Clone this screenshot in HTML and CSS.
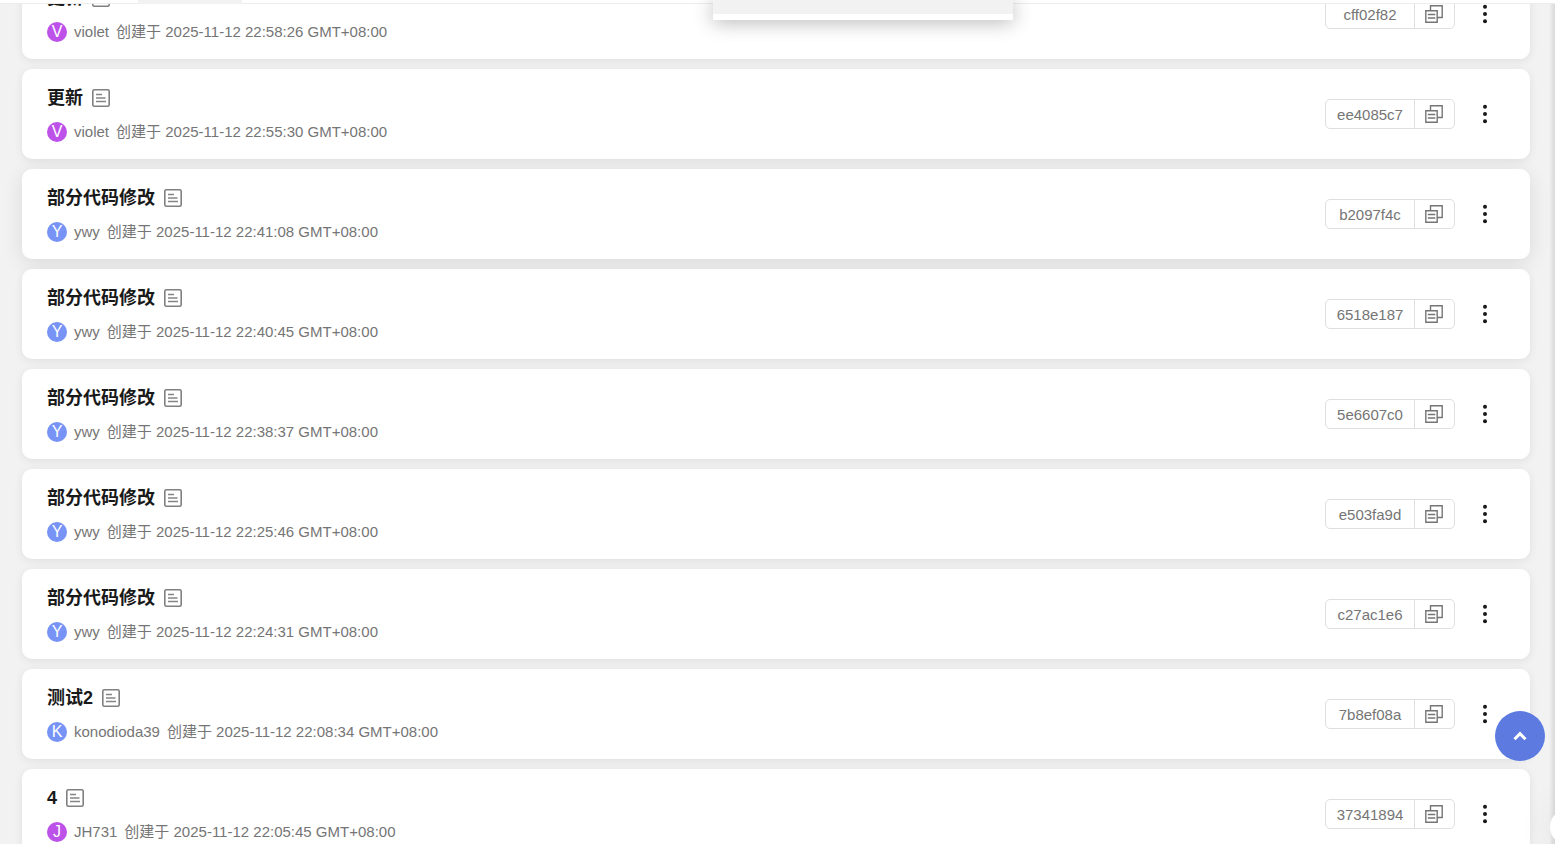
FILE: index.html
```html
<!DOCTYPE html>
<html lang="zh-CN">
<head>
<meta charset="utf-8">
<title>提交记录</title>
<link rel="stylesheet" href="styles.css">
</head>
<body>
<svg class="sprite" aria-hidden="true">
  <symbol id="note" viewBox="0 0 18 18"><rect x=".8" y=".8" width="16.400" height="16.400" rx="1.500" fill="none" stroke="#808080" stroke-width="1.600"/><path d="M4 5.500h6M4 9h9.500M4 12.500h10" stroke="#858585" stroke-width="1.600"/></symbol>
  <symbol id="copy" viewBox="0 0 18 18"><path d="M5.500 5.500V.8h11.700v11.700h-5M.8 5.800h11.400v11.400H.8zM2.800 9.500h7.500M2.800 13h7.500" fill="none" stroke="#757575" stroke-width="1.400"/></symbol>
  <symbol id="dots" viewBox="0 0 6 20"><circle cx="3" cy="2.800" r="2"/><circle cx="3" cy="10" r="2"/><circle cx="3" cy="17.200" r="2"/></symbol>
</svg>
<div class="topbar"><span class="tab"></span></div>
<div class="dropdown"></div>
<main class="commits" id="commits"></main>
<div class="edge"></div>
<button class="to-top" aria-label="回到顶部"><svg viewBox="0 0 14 10"><path d="M1.500 8.200L7 2.700l5.500 5.500" fill="none" stroke="#fff" stroke-width="3"/></svg></button>
<div class="handle"></div>
<script src="app.js"></script>
</body>
</html>
```
FILE: styles.css
```css
* { box-sizing: border-box; }
body {
  margin: 0;
  height: 100vh;
  overflow: hidden;
  background: #f2f2f2;
  font-family: "Liberation Sans", "Noto Sans CJK SC", sans-serif;
  font-size: 15px;
  color: #757575;
}
button { padding: 0; border: 0; background: none; font: inherit; cursor: pointer; }
.sprite { position: absolute; width: 0; height: 0; }
.topbar {
  position: fixed;
  z-index: 2;
  top: 0;
  left: 0;
  right: 0;
  height: 4px;
  padding-left: 138px;
  background: #fff;
  border-bottom: 1px solid #ededed;
}
.tab { display: block; width: 104px; height: 4px; background: #f2f2f2; }
.dropdown {
  position: fixed;
  z-index: 3;
  top: 0;
  left: 713px;
  width: 300px;
  height: 20px;
  background: #f2f2f2;
  border-bottom: 6px solid #fff;
  box-shadow: 0 2px 20px rgba(0, 0, 0, .3);
}
.commits {
  display: flex;
  flex-direction: column;
  gap: 10px;
  margin: -31px 25px 0 22px;
}
.commit {
  display: flex;
  align-items: center;
  justify-content: space-between;
  height: 90px;
  flex: none;
  padding: 0 42px 0 25px;
  background: #fff;
  border-radius: 10px;
  box-shadow: 0 2px 10px rgba(0, 0, 0, .08);
}
.commit.active { box-shadow: 0 4px 20px rgba(0, 0, 0, .1); }
.info { display: flex; flex-direction: column; gap: 10px; padding-top: 2px; }
.heading { display: flex; align-items: center; gap: 9px; height: 24px; }
.title { margin: 0; font-size: 18px; line-height: 24px; font-weight: 700; color: #191919; }
.note { display: flex; }
.note svg, .copy svg { width: 18px; height: 18px; }
.meta { display: flex; align-items: center; height: 24px; line-height: 24px; }
.avatar {
  width: 20px;
  height: 20px;
  margin-right: 7px;
  border-radius: 50%;
  background: #7693f5;
  color: #fff;
  font-size: 16px;
  line-height: 20px;
  text-align: center;
}
.avatar.purple { background: #bd52e8; }
.author { margin-right: 7px; color: inherit; text-decoration: none; }
.actions { display: flex; align-items: center; gap: 27px; }
.hash { display: flex; width: 130px; height: 30px; border: 1px solid #dfdfdf; border-radius: 5px; }
.sha { flex: 1; line-height: 30px; text-align: center; color: inherit; text-decoration: none; }
.copy { display: flex; align-items: center; justify-content: center; width: 40px; padding-right: 1px; border-left: 1px solid #dfdfdf; }
.more { display: flex; fill: #191919; }
.more svg { width: 6px; height: 20px; }
.edge {
  position: fixed;
  top: 4px;
  right: 0;
  bottom: 0;
  width: 6px;
  background: linear-gradient(to right, transparent, rgba(0, 0, 0, .1));
}
.to-top {
  position: fixed;
  right: 10px;
  bottom: 83px;
  display: flex;
  align-items: center;
  justify-content: center;
  width: 50px;
  height: 50px;
  border-radius: 50%;
  background: #5c7ae0;
}
.to-top svg { width: 14px; height: 10px; }
.handle {
  position: fixed;
  right: -31px;
  bottom: -1px;
  width: 36px;
  height: 36px;
  border-radius: 50%;
  background: #fff;
  box-shadow: 0 0 40px rgba(0, 0, 0, .08);
}
```
FILE: app.js
```js
const commits = [
  ["更新", "violet", "2025-11-12 22:58:26", "cff02f82"],
  ["更新", "violet", "2025-11-12 22:55:30", "ee4085c7"],
  ["部分代码修改", "ywy", "2025-11-12 22:41:08", "b2097f4c"],
  ["部分代码修改", "ywy", "2025-11-12 22:40:45", "6518e187"],
  ["部分代码修改", "ywy", "2025-11-12 22:38:37", "5e6607c0"],
  ["部分代码修改", "ywy", "2025-11-12 22:25:46", "e503fa9d"],
  ["部分代码修改", "ywy", "2025-11-12 22:24:31", "c27ac1e6"],
  ["测试2", "konodioda39", "2025-11-12 22:08:34", "7b8ef08a"],
  ["4", "JH731", "2025-11-12 22:05:45", "37341894"],
];
const purple = ["violet", "JH731"];
document.getElementById("commits").innerHTML = commits.map(([title, author, time, sha], i) => `
  <article class="commit${i === 2 ? " active" : ""}">
    <div class="info">
      <div class="heading">
        <h2 class="title">${title}</h2>
        <button class="note" aria-label="详情"><svg><use href="#note"/></svg></button>
      </div>
      <div class="meta">
        <span class="avatar${purple.includes(author) ? " purple" : ""}">${author[0].toUpperCase()}</span>
        <a class="author" href="#">${author}</a>
        <span>创建于 ${time} GMT+08:00</span>
      </div>
    </div>
    <div class="actions">
      <div class="hash">
        <a class="sha" href="#">${sha}</a>
        <button class="copy" aria-label="复制"><svg><use href="#copy"/></svg></button>
      </div>
      <button class="more" aria-label="更多"><svg><use href="#dots"/></svg></button>
    </div>
  </article>`).join("");
```
